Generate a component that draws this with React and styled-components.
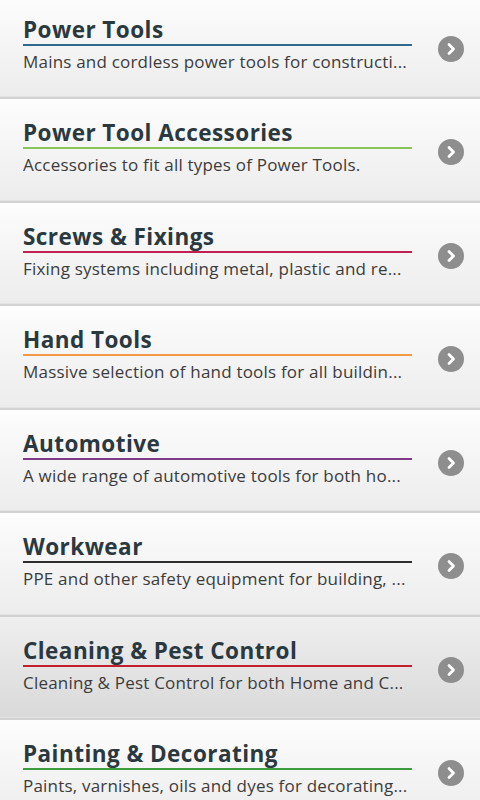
import React from "react";
import styled, { createGlobalStyle } from "styled-components";

const GlobalStyle = createGlobalStyle`
  html, body {
    margin: 0;
    padding: 0;
    background: #fafafa;
    overflow: hidden;
  }
  body {
    font-family: "Open Sans", "DejaVu Sans", sans-serif;
  }
`;

const categories = [
  { title: "Power Tools", desc: "Mains and cordless power tools for constructi...", color: "#2f6a8c" },
  { title: "Power Tool Accessories", desc: "Accessories to fit all types of Power Tools.", color: "#86c45a" },
  { title: "Screws & Fixings", desc: "Fixing systems including metal, plastic and re...", color: "#c21f52" },
  { title: "Hand Tools", desc: "Massive selection of hand tools for all buildin...", color: "#f29a45" },
  { title: "Automotive", desc: "A wide range of automotive tools for both ho...", color: "#7e3a86" },
  { title: "Workwear", desc: "PPE and other safety equipment for building, ...", color: "#2e2e2e" },
  { title: "Cleaning & Pest Control", desc: "Cleaning & Pest Control for both Home and C...", color: "#c2202f", pressed: true },
  { title: "Painting & Decorating", desc: "Paints, varnishes, oils and dyes for decorating...", color: "#3d9a3f" },
];

const List = styled.div`
  margin-top: -4.5px;
  width: 480px;
`;

const Row = styled.div`
  display: flex;
  align-items: flex-start;
  height: 103.5px;
  box-sizing: border-box;
  padding: 20px 16px 0 23px;
  background: ${({ $pressed }) =>
    $pressed
      ? "linear-gradient(#efefef, #d9d9d9)"
      : "linear-gradient(#fdfdfd, #ececec)"};
  border-bottom: 2px solid #d2d2d2;
  box-shadow: inset 0 -3px 0 -2px #e2e2e2;
`;

const Texts = styled.div`
  width: 389px;
  min-width: 0;
  flex-shrink: 0;
`;

const Title = styled.div`
  font-size: 22.5px;
  font-weight: 700;
  line-height: 28px;
  color: #2a3840;
  letter-spacing: 0.45px;
  white-space: nowrap;
  border-bottom: 2px solid ${({ $color }) => $color};
`;

const Desc = styled.div`
  font-size: 17px;
  line-height: 26px;
  margin-top: 3px;
  color: #3c3c3c;
  letter-spacing: 0.2px;
  white-space: nowrap;
  overflow: hidden;
  text-overflow: ellipsis;
`;

const Arrow = styled.div`
  margin-left: auto;
  margin-top: 20px;
  width: 26px;
  height: 26px;
  border-radius: 50%;
  background: #8e8e8e;
  display: flex;
  align-items: center;
  justify-content: center;
`;

const Chevron = () => (
  <svg width="14" height="14" viewBox="0 0 14 14">
    <path d="M5 2.5 L9.5 7 L5 11.5" fill="none" stroke="#fff" strokeWidth="2.8" strokeLinecap="round" strokeLinejoin="round" />
  </svg>
);

export default function App() {
  return (
    <>
      <GlobalStyle />
      <List>
        {categories.map((c) => (
          <Row key={c.title} $pressed={c.pressed}>
            <Texts>
              <Title $color={c.color}>{c.title}</Title>
              <Desc>{c.desc}</Desc>
            </Texts>
            <Arrow>
              <Chevron />
            </Arrow>
          </Row>
        ))}
      </List>
    </>
  );
}
